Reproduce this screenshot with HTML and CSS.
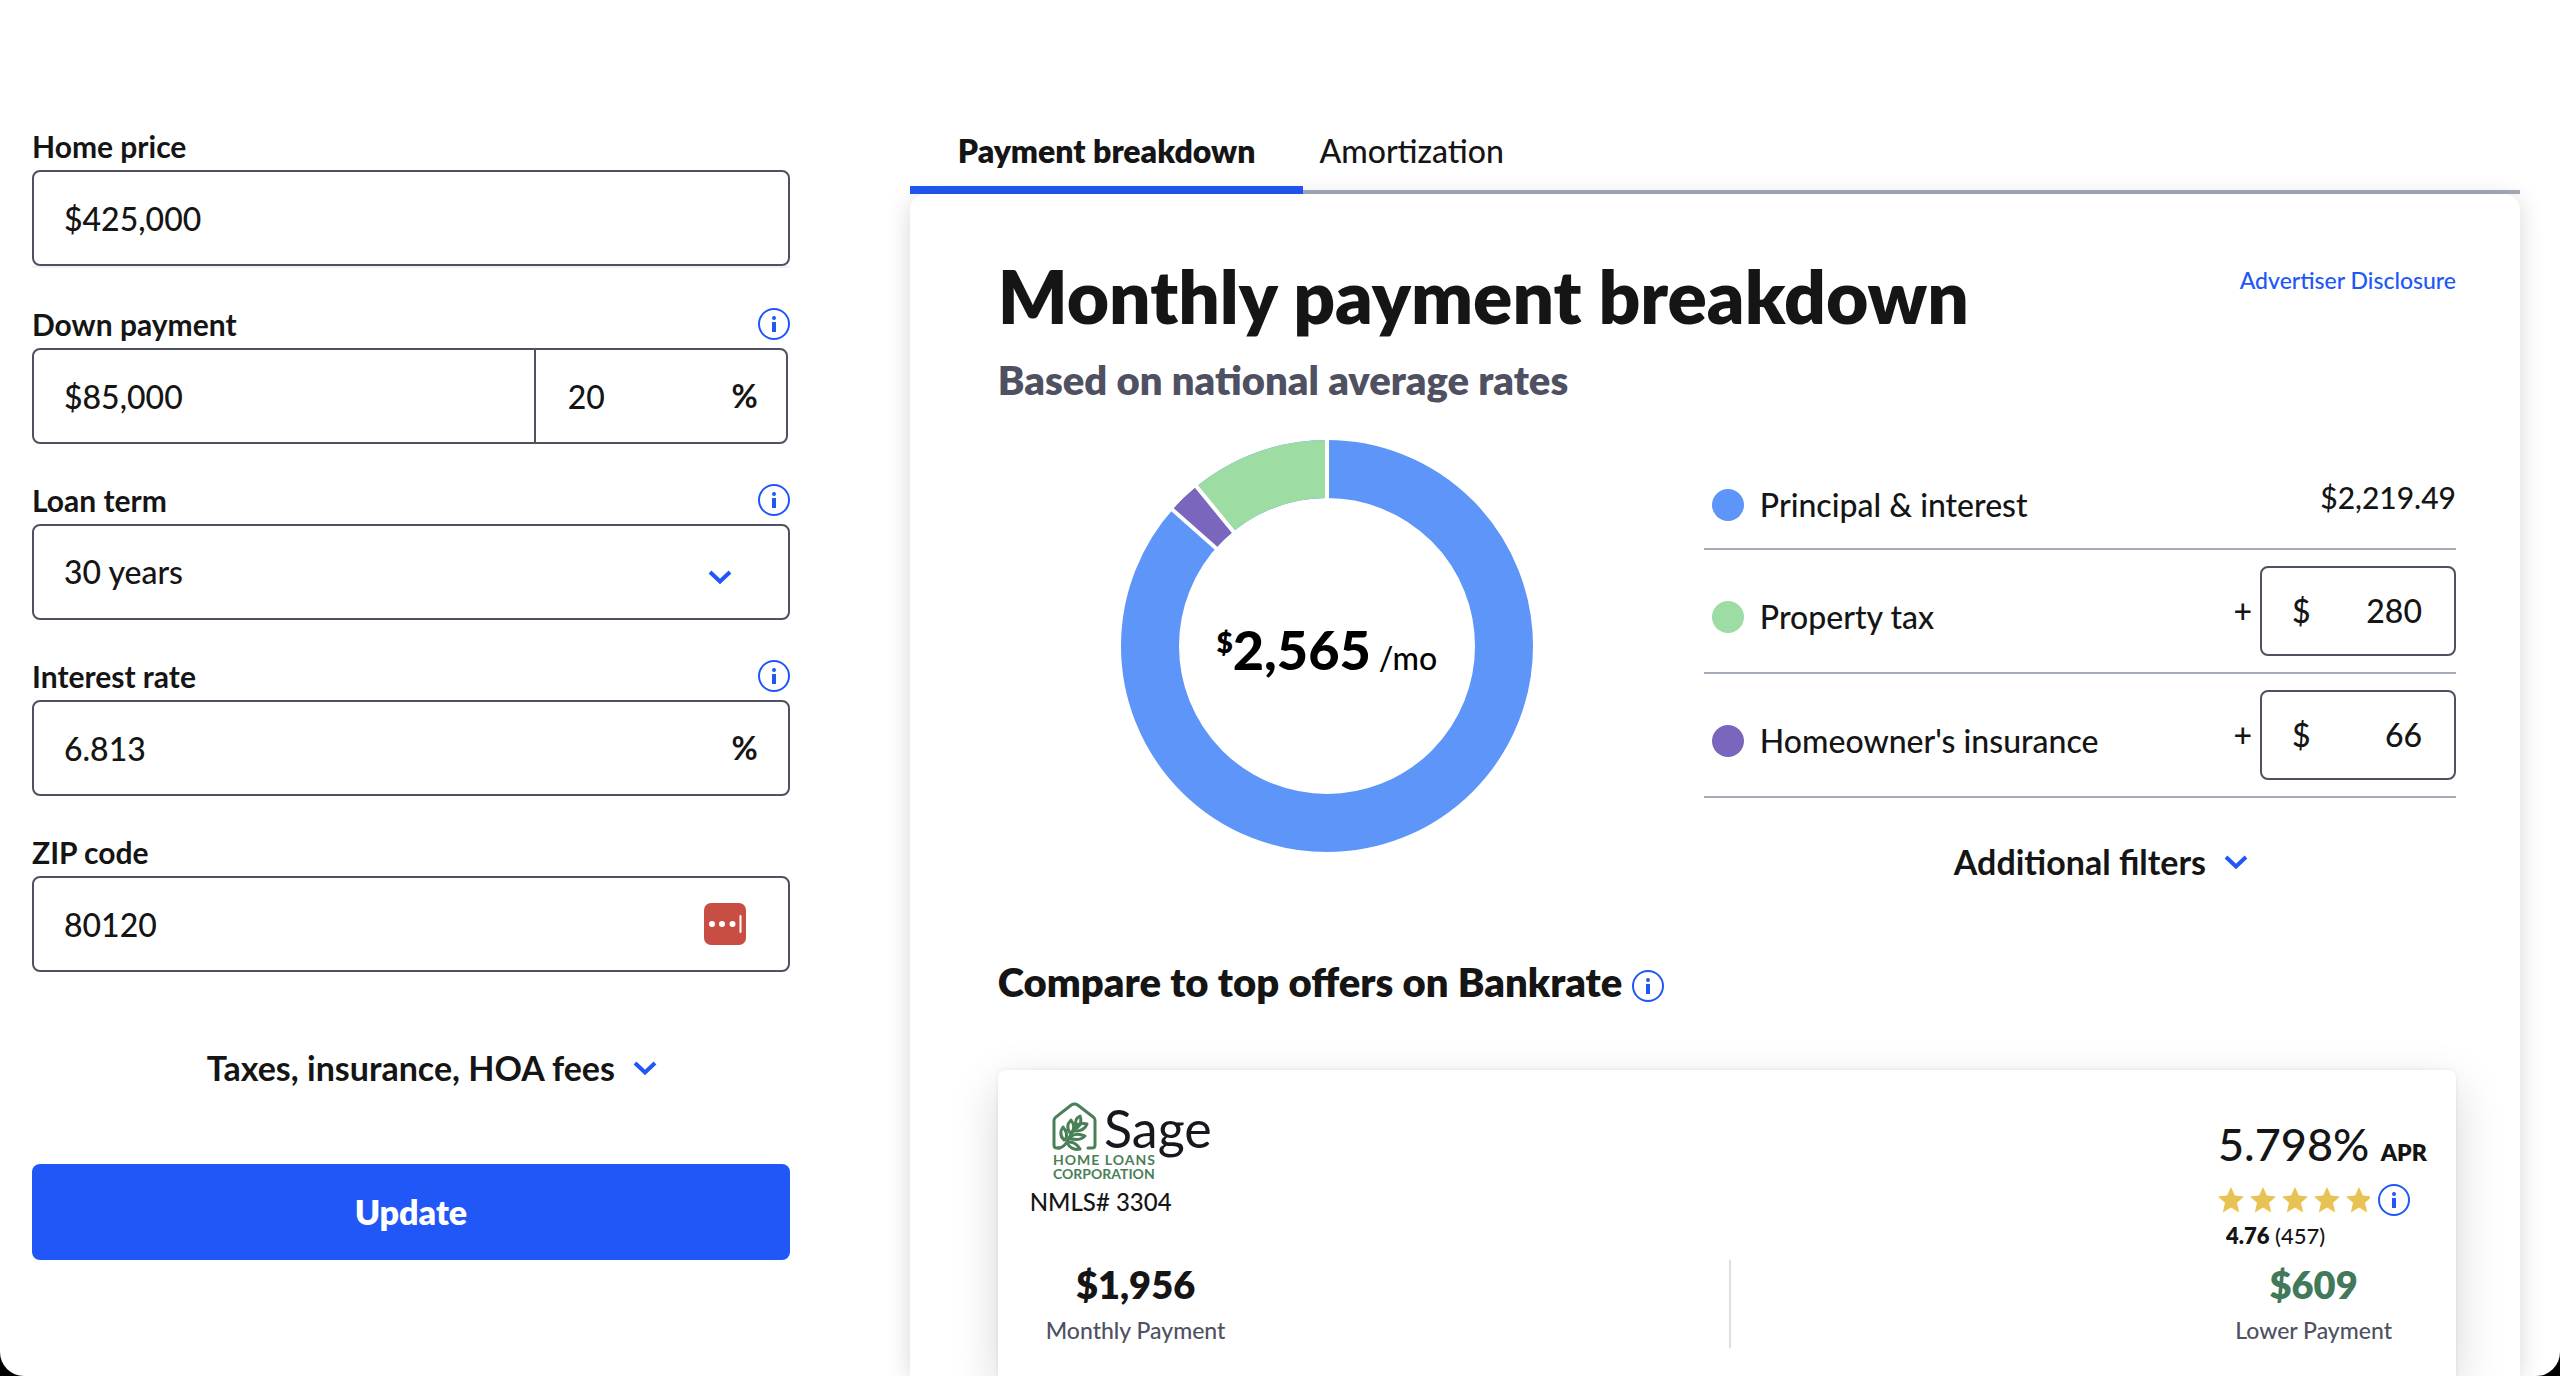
FILE: index.html
```html
<!DOCTYPE html>
<html lang="en">
<head>
<meta charset="utf-8">
<meta name="viewport" content="width=device-width, initial-scale=1">
<title>Mortgage calculator</title>
<link rel="stylesheet" href="styles.css">
</head>
<body>
<svg class="sprite" aria-hidden="true">
  <symbol id="info" viewBox="0 0 32 32">
    <circle cx="16" cy="16" r="15" fill="none" stroke="currentColor" stroke-width="2"/>
    <circle cx="16" cy="10" r="2" fill="currentColor"/>
    <path d="M14 14h4v10h-4z" fill="currentColor"/>
  </symbol>
  <symbol id="chevron" viewBox="0 0 24 14">
    <path d="M2 2l10 9.500L22 2" fill="none" stroke="currentColor" stroke-width="4"/>
  </symbol>
  <symbol id="star" viewBox="0 0 26 26">
    <path d="M13 0l3.800 8.600 9.200.8-7 6.300 2.200 9.900L13 20.600l-8.200 5 2.200-9.900-7-6.300 9.200-.8z" fill="#e8c252"/>
  </symbol>
</svg>
<div class="window">
  <main class="calculator">
    <form class="inputs">
      <div class="field field-lined">
        <div class="field-head"><label for="price">Home price</label></div>
        <div class="control"><input id="price" type="text" value="$425,000"></div>
      </div>
      <div class="field">
        <div class="field-head">
          <label for="down">Down payment</label>
          <button type="button" class="info" aria-label="About down payment"><svg><use href="#info"/></svg></button>
        </div>
        <div class="control control-split">
          <input id="down" type="text" value="$85,000">
          <div class="percent">
            <input type="text" value="20" aria-label="Down payment percent">
            <span class="unit">%</span>
          </div>
        </div>
      </div>
      <div class="field">
        <div class="field-head">
          <label for="term">Loan term</label>
          <button type="button" class="info" aria-label="About loan term"><svg><use href="#info"/></svg></button>
        </div>
        <div class="control">
          <select id="term"><option>30 years</option><option>20 years</option><option>15 years</option></select>
          <svg class="chevron select-chevron" aria-hidden="true"><use href="#chevron"/></svg>
        </div>
      </div>
      <div class="field">
        <div class="field-head">
          <label for="rate">Interest rate</label>
          <button type="button" class="info" aria-label="About interest rate"><svg><use href="#info"/></svg></button>
        </div>
        <div class="control"><input id="rate" type="text" value="6.813"><span class="unit">%</span></div>
      </div>
      <div class="field">
        <div class="field-head"><label for="zip">ZIP code</label></div>
        <div class="control">
          <input id="zip" type="text" value="80120">
          <button type="button" class="autofill" aria-label="Fill in">
            <svg viewBox="0 0 42 42"><rect width="42" height="42" rx="7" fill="#c84d42"/><g fill="#fff"><circle cx="8" cy="21" r="3"/><circle cx="18" cy="21" r="3"/><circle cx="28.500" cy="21" r="3"/><rect x="35.500" y="12" width="2" height="18" rx="1"/></g></svg>
          </button>
        </div>
      </div>
      <button type="button" class="expander">Taxes, insurance, HOA fees <svg class="chevron" aria-hidden="true"><use href="#chevron"/></svg></button>
      <button type="submit" class="update">Update</button>
    </form>

    <section class="results">
      <div class="tabs" role="tablist">
        <button type="button" class="tab tab-active" role="tab" aria-selected="true">Payment breakdown</button>
        <button type="button" class="tab" role="tab" aria-selected="false">Amortization</button>
      </div>
      <div class="panel">
        <header class="panel-head">
          <div>
            <h1>Monthly payment breakdown</h1>
            <p class="subtitle">Based on national average rates</p>
          </div>
          <a class="disclosure" href="#">Advertiser Disclosure</a>
        </header>

        <div class="breakdown">
          <div class="chart">
            <svg class="donut" viewBox="-206 -206 412 412" role="img" aria-label="Payment breakdown chart">
              <g fill="none" stroke-width="58">
                <circle r="177" stroke="#5e95f9"/>
                <circle r="177" stroke="#7a66bd" pathLength="2565" stroke-dasharray="66 2499" stroke-dashoffset="-2219" transform="rotate(-90)"/>
                <circle r="177" stroke="#9ddca3" pathLength="2565" stroke-dasharray="280 2285" stroke-dashoffset="-2285" transform="rotate(-90)"/>
              </g>
              <g stroke="#fff" stroke-width="4">
                <path d="M0-140V-210"/>
                <path d="M0-140V-210" transform="rotate(-48.600)"/>
                <path d="M0-140V-210" transform="rotate(-39.300)"/>
              </g>
            </svg>
            <p class="total"><span class="total-sign">$</span><strong>2,565</strong><span class="total-unit">/mo</span></p>
          </div>
          <div class="legend">
            <div class="item">
              <span class="dot dot-principal"></span>
              <span class="item-name">Principal &amp; interest</span>
              <span class="amount">$2,219.49</span>
            </div>
            <div class="item">
              <span class="dot dot-tax"></span>
              <label class="item-name" for="tax">Property tax</label>
              <span class="plus">+</span>
              <div class="money"><span>$</span><input id="tax" type="text" value="280"></div>
            </div>
            <div class="item">
              <span class="dot dot-insurance"></span>
              <label class="item-name" for="insurance">Homeowner's insurance</label>
              <span class="plus">+</span>
              <div class="money"><span>$</span><input id="insurance" type="text" value="66"></div>
            </div>
            <button type="button" class="expander">Additional filters <svg class="chevron" aria-hidden="true"><use href="#chevron"/></svg></button>
          </div>
        </div>

        <div class="offers-head">
          <h2>Compare to top offers on Bankrate</h2>
          <button type="button" class="info" aria-label="About these offers"><svg><use href="#info"/></svg></button>
        </div>

        <article class="offer">
          <div class="offer-top">
            <div>
              <svg class="logo" viewBox="0 0 164 80" role="img" aria-label="Sage Home Loans Corporation">
                <g fill="none" stroke="#4a8058" stroke-width="3" stroke-linecap="round" stroke-linejoin="round">
                  <path d="M8 46H5q-3 0-3-3V18.500q0-2 1.500-3.200L19 3.200q3.500-2.400 7 0l15.500 12.100Q43 16.500 43 18.500V43q0 3-3 3h-4"/>
                  <path d="M6 46q5 0 9-6Q22 26 26 22"/>
                  <path d="M12 38q-6-6-1-13 6 7 2 13M18 31q-5-7 1-13 5 7 1 12M24 24q-2-7 4-10 3 7-3 12"/>
                  <path d="M22 28q4-8 13-6-3 8-14 7M18 35q6-5 15-1-6 6-16 2M16 40q7-1 12 7-8 2-13-6"/>
                </g>
                <text class="logo-name" x="52" y="46">Sage</text>
                <text class="logo-line" x="1" y="63">HOME LOANS</text>
                <text class="logo-line logo-line-tight" x="1" y="77">CORPORATION</text>
              </svg>
              <p class="nmls">NMLS# 3304</p>
            </div>
            <div class="apr">
              <p class="apr-rate">5.798% <span>APR</span></p>
              <div class="rating">
                <svg class="stars" viewBox="0 0 152 26" role="img" aria-label="4.76 out of 5 stars">
                  <use href="#star" width="26" height="26"/>
                  <use href="#star" x="32" width="26" height="26"/>
                  <use href="#star" x="64" width="26" height="26"/>
                  <use href="#star" x="96" width="26" height="26"/>
                  <use href="#star" x="128" width="26" height="26"/>
                </svg>
                <button type="button" class="info" aria-label="About ratings"><svg><use href="#info"/></svg></button>
              </div>
              <p class="score"><strong>4.76</strong> (457)</p>
            </div>
          </div>
          <div class="offer-stats">
            <div class="stat"><strong>$1,956</strong><span>Monthly Payment</span></div>
            <div class="rule"></div>
            <div class="stat stat-saving"><strong>$609</strong><span>Lower Payment</span></div>
          </div>
        </article>
      </div>
    </section>
  </main>
</div>
</body>
</html>
```

FILE: styles.css
```css
* { box-sizing: border-box; }

:root {
  --ink: #151515;
  --muted: #4f5162;
  --blue: #2157f7;
  --line: #a5aaba;
}

body {
  margin: 0;
  background: #000;
  color: var(--ink);
  font: 500 32px/40px Lato, "Liberation Sans", sans-serif;
}

h1, h2, p { margin: 0; }

button, input, select {
  margin: 0;
  padding: 0;
  border: 0;
  background: none;
  color: inherit;
  font: inherit;
}

.sprite { position: absolute; width: 0; height: 0; }

.window {
  height: 100vh;
  overflow: hidden;
  border-radius: 0 0 24px 24px;
  background: #fff;
}

.calculator {
  display: grid;
  grid-template-columns: minmax(0, 8fr) minmax(0, 17fr);
  gap: 120px;
  height: 100%;
  padding: 112px 40px 0 32px;
}

/* Loan inputs */
.inputs { padding-top: 14px; }

.field { margin-bottom: 36px; }
.field-lined { border-bottom: 2px solid #f1f2f8; }

.field-head {
  display: flex;
  align-items: center;
  justify-content: space-between;
  height: 40px;
  margin-bottom: 4px;
  font-size: 30px;
  font-weight: 700;
}

.info { width: 32px; height: 32px; color: var(--blue); }
.info svg { display: block; width: 32px; height: 32px; }

.control {
  position: relative;
  display: flex;
  align-items: center;
  height: 96px;
  padding: 0 30px;
  border: 2px solid var(--muted);
  border-radius: 8px;
}
.control input, .control select { flex: 1; min-width: 0; height: 92px; }
.control select { appearance: none; }
.unit { font-weight: 700; }

.control-split { margin-right: 2px; padding-right: 0; }
.percent {
  display: flex;
  align-items: center;
  flex: 0 0 252px;
  min-width: 0;
  padding: 0 28px 0 32px;
  border-left: 2px solid var(--muted);
}

.chevron { width: 24px; height: 14px; color: var(--blue); }
.select-chevron { position: absolute; right: 56px; top: 44px; pointer-events: none; }

.autofill { width: 42px; height: 42px; margin-right: 12px; }
.autofill svg { display: block; }

.expander {
  display: flex;
  align-items: center;
  justify-content: center;
  gap: 18px;
  width: 100%;
  height: 48px;
  font-size: 34px;
  font-weight: 700;
}
.inputs .expander { margin: 72px 0; padding-left: 42px; }

.update {
  width: 100%;
  height: 96px;
  border-radius: 8px;
  background: var(--blue);
  color: #fff;
  font-size: 34px;
  font-weight: 800;
}

/* Results */
.results { display: flex; flex-direction: column; min-height: 0; }

.tabs {
  display: flex;
  height: 82px;
  background: linear-gradient(var(--line), var(--line)) bottom / 100% 4px no-repeat;
}
.tab { padding: 0 16px 4px; }
.tab-active {
  padding: 4px 48px 0;
  border-bottom: 8px solid var(--blue);
  font-weight: 800;
}

.panel {
  display: flex;
  flex: 1;
  flex-direction: column;
  min-height: 0;
  padding: 62px 64px 0 88px;
  border-radius: 16px 16px 0 0;
  box-shadow: 0 4px 24px rgba(0, 0, 0, .16);
}

.panel-head { display: flex; justify-content: space-between; }
h1 { font-size: 73px; font-weight: 800; line-height: 80px; }
.subtitle {
  margin-top: 20px;
  color: var(--muted);
  font-size: 40px;
  font-weight: 800;
  line-height: 48px;
}
.disclosure {
  margin-top: 8px;
  color: var(--blue);
  font-size: 23px;
  line-height: 32px;
  text-decoration: none;
}

.breakdown {
  display: grid;
  grid-template-columns: minmax(0, 7fr) minmax(0, 8fr);
  gap: 48px;
  margin-top: 36px;
}

.chart { display: grid; place-items: center; align-self: start; }
.chart > * { grid-area: 1 / 1; }
.donut { width: 412px; height: 412px; }
.total { display: flex; align-items: baseline; padding-top: 16px; color: #000; }
.total-sign { align-self: flex-start; font-size: 28px; font-weight: 800; line-height: 24px; }
.total strong { font-size: 54px; font-weight: 900; }
.total-unit { margin-left: 8px; }

.legend { padding-top: 10px; }
.item {
  display: flex;
  align-items: center;
  height: 124px;
  padding: 12px 0 0 8px;
  border-bottom: 2px solid var(--line);
}
.item:first-child { height: 100px; }
.dot { width: 32px; height: 32px; margin-right: 16px; border-radius: 50%; }
.dot-principal { background: #5e95f9; }
.dot-tax { background: #9ddca3; }
.dot-insurance { background: #7a66bd; }
.item-name { flex: 1; }
.amount { padding-bottom: 16px; font-size: 30px; }
.plus { padding-bottom: 12px; }
.money {
  display: flex;
  align-items: center;
  width: 196px;
  height: 90px;
  margin: 0 0 12px 8px;
  padding: 0 32px 0 30px;
  border: 2px solid var(--muted);
  border-radius: 8px;
}
.money input { flex: 1; min-width: 0; text-align: right; }
.legend .expander { margin-top: 40px; padding-left: 42px; }

.offers-head { display: flex; align-items: center; gap: 10px; margin-top: 72px; }
.offers-head .info { margin-top: 8px; }
h2 { font-size: 40px; font-weight: 800; line-height: 48px; }

/* Lender offer */
.offer {
  flex: 1;
  margin-top: 64px;
  padding: 32px 32px 0;
  border-radius: 8px 8px 0 0;
  box-shadow: 0 16px 48px rgba(0, 0, 0, .16), 0 0 4px rgba(0, 0, 0, .08);
}
.offer-top { display: flex; justify-content: space-between; }

.logo { display: block; width: 164px; height: 80px; margin-left: 22px; overflow: visible; }
.logo-name { fill: #17181f; font-size: 52px; font-weight: 400; }
.logo-line { fill: #4a8058; font-size: 14px; font-weight: 700; letter-spacing: 1px; }
.logo-line-tight { letter-spacing: 0; }
.nmls { margin-top: 4px; font-size: 24px; line-height: 32px; }

.apr { width: 206px; }
.apr-rate { margin-top: 14px; font-size: 45px; line-height: 56px; white-space: nowrap; }
.apr-rate span { font-size: 23px; font-weight: 800; line-height: 24px; }
.rating { display: flex; align-items: center; gap: 8px; margin-top: 12px; }
.stars { width: 152px; height: 26px; overflow: hidden; }
.score { margin: 8px 0 0 8px; font-size: 22px; line-height: 24px; }
.score strong { font-weight: 800; }

.offer-stats { display: flex; justify-content: space-between; padding: 12px 32px 0 16px; }
.stat { display: grid; justify-items: center; gap: 4px; }
.stat strong { font-size: 38px; font-weight: 800; line-height: 48px; }
.stat span { color: var(--muted); font-size: 23px; line-height: 32px; }
.stat-saving strong { color: #42795b; }
.rule { width: 2px; height: 88px; background: #dddde6; }
```
